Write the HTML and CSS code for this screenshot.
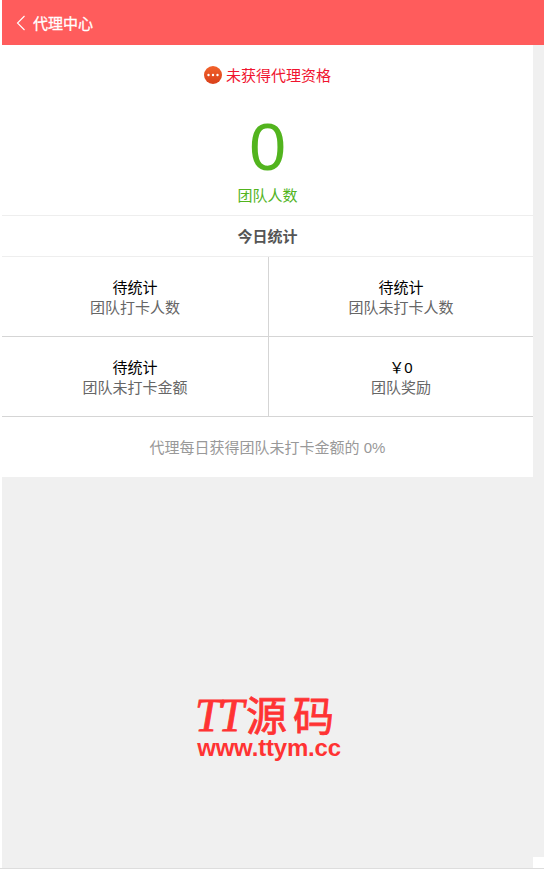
FILE: index.html
```html
<!DOCTYPE html>
<html lang="zh-CN">
  <head>
    <meta charset="UTF-8" />
    <meta name="viewport" content="width=device-width, initial-scale=1.0" />
    <title>代理中心</title>
    <link rel="stylesheet" href="styles.css">
  </head>
  <body>
    <div class="page">
      <header class="top-bar">
        <svg class="back-icon" width="10" height="16" viewBox="0 0 10 16">
          <path d="M8.5 1 L1.5 8 L8.5 15" fill="none" stroke="#fff" stroke-width="1.1" />
        </svg>
        <span>代理中心</span>
      </header>
      <div class="main">
        <div class="content">
          <div class="status">
            <svg class="status-icon" width="18" height="18" viewBox="0 0 18 18">
              <defs>
                <linearGradient id="dot-bg" x1="0" y1="0" x2="0" y2="1">
                  <stop offset="0" stop-color="#f2622a" />
                  <stop offset="1" stop-color="#d9401a" />
                </linearGradient>
              </defs>
              <circle cx="9" cy="9" r="9" fill="url(#dot-bg)" />
              <circle cx="4.5" cy="9" r="1.2" fill="#fff" />
              <circle cx="9" cy="9" r="1.2" fill="#fff" />
              <circle cx="13.5" cy="9" r="1.2" fill="#fff" />
            </svg>
            <span>未获得代理资格</span>
          </div>
          <div class="team-count">0</div>
          <div class="team-label">团队人数</div>
          <div class="today-title">今日统计</div>
          <div class="stats">
            <div class="stat-cell">
              <div class="stat-value">待统计</div>
              <div class="stat-name">团队打卡人数</div>
            </div>
            <div class="stat-cell">
              <div class="stat-value">待统计</div>
              <div class="stat-name">团队未打卡人数</div>
            </div>
            <div class="stat-cell">
              <div class="stat-value">待统计</div>
              <div class="stat-name">团队未打卡金额</div>
            </div>
            <div class="stat-cell">
              <div class="stat-value">￥0</div>
              <div class="stat-name">团队奖励</div>
            </div>
          </div>
          <div class="note">代理每日获得团队未打卡金额的 0%</div>
        </div>
        <div class="watermark">
          <div class="wm-title"><span class="wm-tt">TT</span>源码</div>
          <div class="wm-url">www.ttym.cc</div>
        </div>
        <div class="corner"></div>
      </div>
    </div>
  </body>
</html>
```

FILE: styles.css
```css
html,
body {
  margin: 0;
  padding: 0;
}
body {
  font-family: "Liberation Sans", "Noto Sans CJK SC", sans-serif;
  background-color: #fff;
}
.page {
  width: 544px;
  height: 869px;
  padding-left: 2px;
  box-sizing: border-box;
  display: flex;
  flex-direction: column;
  border-bottom: 1px solid #ddd;
}
.top-bar {
  height: 45px;
  flex: none;
  background-color: #ff5c5c;
  color: #fff;
  font-size: 15px;
  -webkit-text-stroke: 0.3px #fff;
  display: flex;
  align-items: center;
  padding-left: 14px;
  gap: 7px;
}
.back-icon {
  display: block;
}
.main {
  flex: 1;
  background-color: #f0f0f0;
  display: flex;
  flex-direction: column;
  position: relative;
}
.content {
  width: 531px;
  background-color: #fff;
}
.status {
  height: 59px;
  display: flex;
  align-items: center;
  justify-content: center;
  gap: 4px;
  font-size: 15px;
  color: #f0142f;
}
.team-count {
  font-size: 66px;
  line-height: 86px;
  height: 82px;
  text-align: center;
  color: #52b41e;
}
.team-label {
  font-size: 15px;
  line-height: 20px;
  padding-bottom: 9px;
  text-align: center;
  color: #52b41e;
  border-bottom: 1px solid #eee;
}
.today-title {
  height: 40px;
  line-height: 42px;
  text-align: center;
  font-size: 15px;
  font-weight: bold;
  color: #555;
  border-bottom: 1px solid #eee;
}
.stats {
  display: grid;
  grid-template-columns: 267px 1fr;
}
.stat-cell {
  height: 58px;
  padding-top: 21px;
  border-bottom: 1px solid #d5d5d5;
  text-align: center;
  font-size: 15px;
  line-height: 20px;
}
.stat-cell:nth-child(odd) {
  border-right: 1px solid #d5d5d5;
}
.stat-value {
  color: #000;
}
.stat-name {
  color: #666;
}
.note {
  height: 60px;
  line-height: 62px;
  text-align: center;
  font-size: 15px;
  color: #999;
}
.watermark {
  margin-top: 216px;
  width: 531px;
  text-align: center;
  color: #ff3333;
}
.wm-title {
  font-size: 41px;
  line-height: 46px;
  letter-spacing: 6px;
  -webkit-text-stroke: 0.8px #ff3333;
}
.wm-tt {
  font-family: "Liberation Serif", serif;
  font-style: italic;
  font-size: 46px;
  letter-spacing: -2px;
  margin-right: 4px;
}
.wm-url {
  font-size: 24px;
  line-height: 16px;
  letter-spacing: -0.2px;
  font-weight: bold;
  margin-left: 3px;
}
.corner {
  position: absolute;
  right: 0;
  bottom: 0;
  width: 11px;
  height: 11px;
  background-color: #fff;
}
```
